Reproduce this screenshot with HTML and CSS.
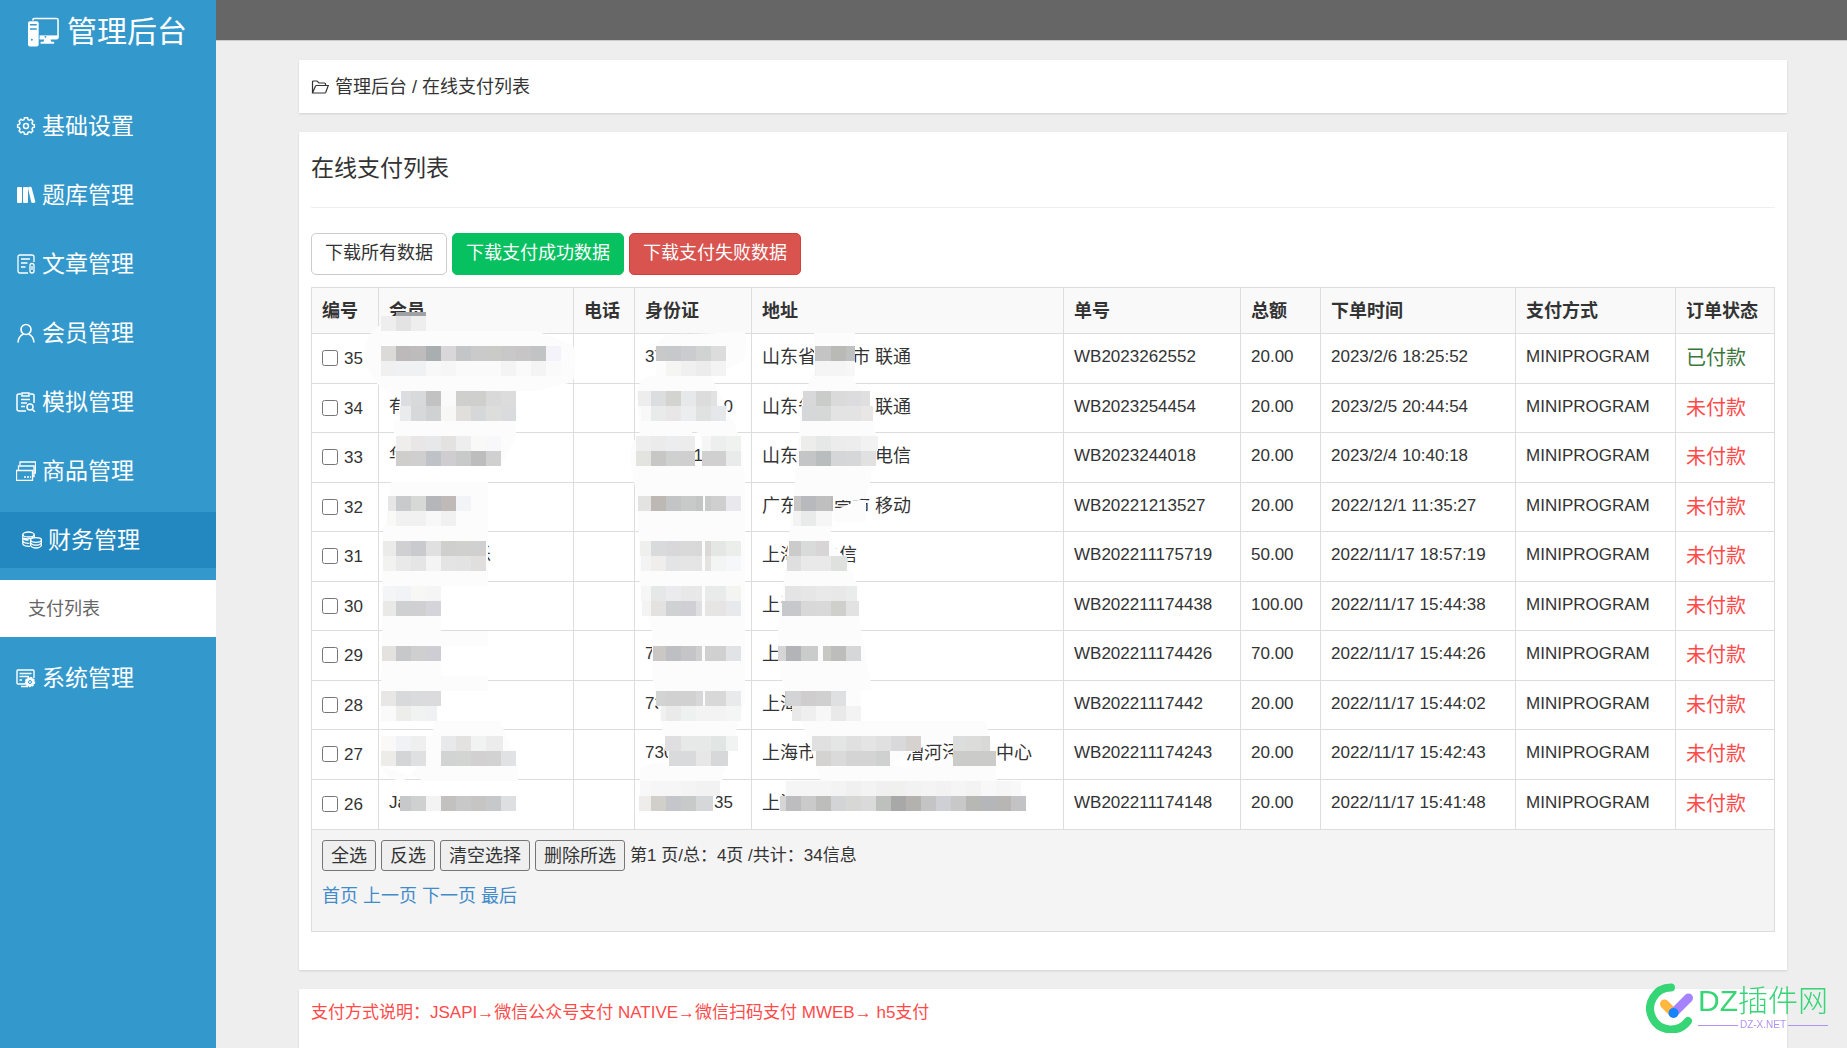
FILE: index.html
```html
<!DOCTYPE html>
<html lang="zh-CN">
<head>
<meta charset="utf-8">
<meta name="viewport" content="width=device-width, initial-scale=1">
<title>在线支付列表 - 管理后台</title>
<link rel="stylesheet" href="styles.css">
</head>
<body>
<div class="layout">
  <aside class="sidebar">
    <a class="brand" href="#">
      <svg class="brand-icon" viewBox="0 0 32 30" fill="none" stroke="currentColor" stroke-width="1.6">
        <path d="M5 3V2.500Q5 1 6.500 1H29.500Q31 1 31 2.500V20.500Q31 22 29.500 22H12"/>
        <path d="M12 18.500H31V22H12Z" fill="currentColor" stroke="none"/>
        <path d="M17 22H23L24 25H27V27H13V25H16Z" fill="currentColor" stroke="none"/>
        <path d="M2 4H9Q11 4 11 6V28Q11 30 9 30H2Q0 30 0 28V6Q0 4 2 4Z" fill="currentColor" stroke="none"/>
        <path d="M2 7.500H9M2 12H9" stroke="#3398cc"/>
        <circle cx="4" cy="23" r="1" fill="#3398cc" stroke="none"/>
        <circle cx="18" cy="20" r="1" fill="#3398cc" stroke="none"/>
      </svg>
      <span>管理后台</span>
    </a>
    <nav class="menu">
      <a class="menu-item" href="#">
        <svg class="menu-icon" viewBox="-1 0 22 22" fill="none" stroke="currentColor" stroke-width="1.600"><path d="M8.300 2h3.400l.5 2 1.600.7 1.800-1.100 2 2.100-1 1.800.6 1.600 2 .5v2.800l-2 .5-.6 1.600 1 1.800-2 2.100-1.800-1.100-1.600.7-.5 2H8.300l-.5-2-1.600-.7-1.800 1.100-2-2.100 1-1.800-.6-1.600-2-.5V9.600l2-.5.6-1.600-1-1.800 2-2.100 1.800 1.100 1.600-.7z"/><circle cx="10" cy="11" r="2.700"/></svg>
        <span>基础设置</span>
      </a>
      <a class="menu-item" href="#">
        <svg class="menu-icon" viewBox="0 0 20 20" fill="currentColor"><rect x="1" y="2" width="5" height="16" rx="1"/><rect x="7" y="2" width="5" height="16" rx="1"/><path d="M12 3.200q-.2-1 .8-1.200l1.600-.2q1-.1 1.200.8L19.300 16.500q.2 1-.8 1.200l-2 .3q-1 .1-1.200-.8z"/></svg>
        <span>题库管理</span>
      </a>
      <a class="menu-item" href="#">
        <svg class="menu-icon" viewBox="0 0 20 20" fill="none" stroke="currentColor" stroke-width="1.300"><path d="M12 19H4Q2 19 2 17V3Q2 1 4 1H16Q18 1 18 3V8M5 5H14M5 9H11.500M5 13H9.500"/><rect x="14" y="9.500" width="4" height="9.500" rx="2"/><path d="M16 12V16"/></svg>
        <span>文章管理</span>
      </a>
      <a class="menu-item" href="#">
        <svg class="menu-icon" viewBox="0 0 20 20" fill="none" stroke="currentColor" stroke-width="1.600"><circle cx="10" cy="6.500" r="5"/><path d="M2 19.500Q2.500 13 7.500 11M18 19.500Q17.500 13 12.500 11"/></svg>
        <span>会员管理</span>
      </a>
      <a class="menu-item" href="#">
        <svg class="menu-icon" viewBox="0 0 20 20" fill="none" stroke="currentColor" stroke-width="1.500"><path d="M10 19H3Q1 19 1 17V3.500Q1 2 3 2H5M14 2H16Q18 2 18 3.500V11"/><path d="M6 1H13V4H6ZM5 7.500H14M5 11H11M5 14.500H9"/><circle cx="14" cy="15" r="3"/><path d="M16 17L19 20"/></svg>
        <span>模拟管理</span>
      </a>
      <a class="menu-item" href="#">
        <svg class="menu-icon" viewBox="0 0 20 20" fill="none" stroke="currentColor" stroke-width="1.300"><path d="M4 4V1H19.500V12H18M2.500 9V5H18V15.500H16.500M.5 9.500H16.500V19.500H.5Z"/><path d="M8 16H15" stroke-dasharray="2 1"/></svg>
        <span>商品管理</span>
      </a>
      <div class="menu-group">
        <a class="menu-item menu-item-open" href="#">
          <svg class="menu-icon" viewBox="0 0 20 18" fill="none" stroke="currentColor" stroke-width="1.300"><ellipse cx="6.500" cy="3.500" rx="5.700" ry="2.500"/><path d="M.8 3.500V13Q2 15.500 8 15.300M12.200 3.500V6M.8 6.700Q2 9.200 6.500 9.200M.8 10Q2 12.500 7.500 12.300M2 7.200Q6 9 11.500 6.500"/><ellipse cx="14" cy="9" rx="5.400" ry="2.300"/><path d="M8.600 9V14.500Q10 17 14 17T19.400 14.500V9M8.600 11.700Q10 14.200 14 14.200T19.400 11.700"/></svg>
          <span>财务管理</span>
        </a>
        <a class="submenu-item" href="#">支付列表</a>
      </div>
      <a class="menu-item" href="#">
        <svg class="menu-icon" viewBox="0 0 20 20" fill="none" stroke="currentColor" stroke-width="1.400"><path d="M10 16H2Q1 16 1 15V3Q1 2 2 2H17Q18 2 18 3V10M3.500 5.500H15.500M3.500 8.500H13M3.500 12H6M5 18.500H12"/><circle cx="14" cy="14" r="4.500" fill="currentColor" stroke-dasharray="2 1"/><circle cx="14" cy="14" r="1.500" stroke="#3398cc" stroke-width="1"/></svg>
        <span>系统管理</span>
      </a>
    </nav>
  </aside>

  <div class="page">
    <header class="topbar"></header>
    <main class="content">
      <div class="card breadcrumb">
        <svg class="crumb-icon" viewBox="0 0 18 14" fill="none" stroke="currentColor" stroke-width="1.200"><path d="M1.500 12.500V2Q1.500 1 2.500 1H6L8 3H13.500Q14.500 3 14.500 4V5.500M1.500 13L4.500 6Q4.700 5.500 5.500 5.500H17.300L14.800 12.300Q14.500 13 13.800 13Z"/></svg>
        <span>管理后台 / 在线支付列表</span>
      </div>

      <section class="card list-card">
        <h1 class="list-title">在线支付列表</h1>
        <div class="actions">
          <button class="btn btn-default" type="button">下载所有数据</button>
          <button class="btn btn-success" type="button">下载支付成功数据</button>
          <button class="btn btn-danger" type="button">下载支付失败数据</button>
        </div>
        <div class="table-wrap">
          <table class="pay-table">
            <colgroup>
              <col class="col-id"><col class="col-member"><col class="col-phone"><col class="col-card"><col class="col-address"><col class="col-order"><col class="col-total"><col class="col-time"><col class="col-method"><col>
            </colgroup>
            <thead>
              <tr><th>编号</th><th>会员</th><th>电话</th><th>身份证</th><th>地址</th><th>单号</th><th>总额</th><th>下单时间</th><th>支付方式</th><th>订单状态</th></tr>
            </thead>
            <tbody>
              <tr><td><label class="pick"><input type="checkbox">35</label></td><td></td><td></td><td>37</td><td class="address">山东省　　市 联通</td><td>WB2023262552</td><td>20.00</td><td>2023/2/6 18:25:52</td><td>MINIPROGRAM</td><td class="status paid">已付款</td></tr>
              <tr><td><label class="pick"><input type="checkbox">34</label></td><td>有</td><td></td><td><span class="tail">0</span></td><td class="address">山东省　　　 联通</td><td>WB2023254454</td><td>20.00</td><td>2023/2/5 20:44:54</td><td>MINIPROGRAM</td><td class="status">未付款</td></tr>
              <tr><td><label class="pick"><input type="checkbox">33</label></td><td>华</td><td></td><td><span class="middle">1</span></td><td class="address">山东省　　　 电信</td><td>WB2023244018</td><td>20.00</td><td>2023/2/4 10:40:18</td><td>MINIPROGRAM</td><td class="status">未付款</td></tr>
              <tr><td><label class="pick"><input type="checkbox">32</label></td><td></td><td></td><td></td><td class="address">广东　　莞市 移动</td><td>WB20221213527</td><td>20.00</td><td>2022/12/1 11:35:27</td><td>MINIPROGRAM</td><td class="status">未付款</td></tr>
              <tr><td><label class="pick"><input type="checkbox">31</label></td><td>　　　　　乐</td><td></td><td></td><td class="address">上海　 电信</td><td>WB202211175719</td><td>50.00</td><td>2022/11/17 18:57:19</td><td>MINIPROGRAM</td><td class="status">未付款</td></tr>
              <tr><td><label class="pick"><input type="checkbox">30</label></td><td></td><td></td><td></td><td class="address">上海</td><td>WB202211174438</td><td>100.00</td><td>2022/11/17 15:44:38</td><td>MINIPROGRAM</td><td class="status">未付款</td></tr>
              <tr><td><label class="pick"><input type="checkbox">29</label></td><td></td><td></td><td>7</td><td class="address">上</td><td>WB202211174426</td><td>70.00</td><td>2022/11/17 15:44:26</td><td>MINIPROGRAM</td><td class="status">未付款</td></tr>
              <tr><td><label class="pick"><input type="checkbox">28</label></td><td></td><td></td><td>73</td><td class="address">上海</td><td>WB20221117442</td><td>20.00</td><td>2022/11/17 15:44:02</td><td>MINIPROGRAM</td><td class="status">未付款</td></tr>
              <tr><td><label class="pick"><input type="checkbox">27</label></td><td></td><td></td><td>730</td><td class="address">上海市　　　　　漕河泾　　中心</td><td>WB202211174243</td><td>20.00</td><td>2022/11/17 15:42:43</td><td>MINIPROGRAM</td><td class="status">未付款</td></tr>
              <tr><td><label class="pick"><input type="checkbox">26</label></td><td>Ja</td><td></td><td><span class="tail">35</span></td><td class="address">上海</td><td>WB202211174148</td><td>20.00</td><td>2022/11/17 15:41:48</td><td>MINIPROGRAM</td><td class="status">未付款</td></tr>
            </tbody>
            <tfoot>
              <tr><td colspan="10">
                <div class="bulk">
                  <button class="bulk-btn" type="button">全选</button>
                  <button class="bulk-btn" type="button">反选</button>
                  <button class="bulk-btn" type="button">清空选择</button>
                  <button class="bulk-btn" type="button">删除所选</button>
                  <span class="summary">第1 页/总：4页 /共计：34信息</span>
                </div>
                <div class="pager"><a href="#">首页</a> <a href="#">上一页</a> <a href="#">下一页</a> <a href="#">最后</a></div>
              </td></tr>
            </tfoot>
          </table>
          <svg class="mosaic" viewBox="311 287 729 552" aria-hidden="true">
            <g fill="#fcfcfc" fill-rule="evenodd">
              <path d="M365 350Q366 332 385 322L426 316V331H536L573 345Q578 360 573 382L537 391H516V436L501 466H394L400 398L386 391Q366 378 365 350Z"/>
              <path d="M394 421H515L512 436H394ZM391 482H488V526H386ZM383 526H488V586H382ZM382 586H441V631H488V646H382ZM382 646H441V676H488V691H441L432 736H380ZM455 721H500L518 766V781H425L381 766V721H455ZM381 751H425Q412 781 400 781Q386 779 381 766Z"/>
              <path d="M656 346Q662 332 690 334L745 332Q748 350 744 361L711 376L723 402L735 425L742 446L745 481V700L722 780L712 811H640V770Q650 760 669 763L652 676V631L640 586L638 511L634 481Q625 440 640 436L637 391Q640 374 656 376ZM692 430L700 434L703 466H695Z"/>
              <path d="M814 333H855V383Q872 392 873 421L877 440L870 482L866 497L833 511L830 541L847 560L858 586L861 631L872 690H861V721H985L996 755V779L1027 797V808H780L790 781H821L803 725L780 676L778 631L784 580L795 482L802 400L814 370ZM890 764L933 742H953V757L905 768ZM834 500H866V522H834Z"/>
            </g>
            <g id="mosaic-cells"></g>
          </svg>
        </div>
      </section>

      <section class="card note">支付方式说明：JSAPI→微信公众号支付 NATIVE→微信扫码支付 MWEB→ h5支付</section>
    </main>
  </div>
</div>

<div class="watermark">
  <svg class="watermark-logo" viewBox="0 0 48 50" fill="none" stroke-linecap="round">
    <path d="M25 4.500A21 21 0 1 0 42 38" stroke="#36d576" stroke-width="8"/>
    <path d="M18.500 21L27 29.500" stroke="#ffb73e" stroke-width="9"/>
    <path d="M42.500 15L27.500 30" stroke="#a583ff" stroke-width="9"/>
    <circle cx="27.500" cy="30" r="5" fill="#1684fc"/>
  </svg>
  <div class="watermark-text">
    <span class="watermark-name">DZ插件网</span>
    <span class="watermark-site">DZ-X.NET</span>
  </div>
</div>
<script src="mosaic.js"></script>
</body>
</html>
```
FILE: styles.css
```css
* { box-sizing: border-box; }

body {
  margin: 0;
  background: #eee;
  color: #333;
  font-family: "Liberation Sans", "Noto Sans CJK SC", sans-serif;
  font-size: 18px;
  font-weight: 400;
  line-height: 26px;
}

a { color: #428bca; text-decoration: none; }
button { font: inherit; color: inherit; cursor: pointer; }

.layout { display: flex; min-height: 100vh; }

/* Sidebar */
.sidebar { flex: 0 0 216px; background: #3398cc; }
.brand {
  display: flex;
  align-items: center;
  gap: 8px;
  height: 64px;
  padding-left: 28px;
  color: #fff;
  font-size: 30px;
}
.brand-icon { width: 31px; height: 30px; }
.menu { display: flex; flex-direction: column; gap: 13px; padding-top: 34px; }
.menu-item {
  display: flex;
  align-items: center;
  gap: 6px;
  height: 56px;
  padding-left: 16px;
  color: #fff;
  font-size: 23px;
}
.menu-icon { width: 20px; height: 20px; }
.menu-group { display: flex; flex-direction: column; gap: 12px; }
.menu-item-open { padding-left: 22px; background: #2288bf; }
.submenu-item {
  display: flex;
  align-items: center;
  height: 57px;
  padding-left: 28px;
  background: #fff;
  color: #666;
}

/* Page */
.page { display: flex; flex: 1; flex-direction: column; min-width: 0; }
.topbar { height: 41px; background: #666; border-bottom: 1px solid #ccc; }
.content {
  display: flex;
  flex: 1;
  flex-direction: column;
  gap: 19px;
  padding: 19px 60px 0 83px;
}
.card { padding: 0 12px; background: #fff; box-shadow: 0 1px 2px rgba(0, 0, 0, .12); }
.breadcrumb { display: flex; align-items: center; gap: 6px; height: 53px; }
.crumb-icon { width: 18px; height: 14px; }

.list-card { padding-bottom: 38px; }
.list-title {
  margin: 0 0 25px;
  padding: 20px 0 22px;
  border-bottom: 1px solid #eee;
  font-size: 23px;
  font-weight: 400;
  line-height: 33px;
}
.actions { display: flex; gap: 5px; margin-bottom: 12px; }
.btn {
  height: 42px;
  padding: 0 13px 2px;
  border: 1px solid #ccc;
  border-radius: 5px;
  background: #fff;
  white-space: nowrap;
}
.btn-success { border-color: #07c160; background: #07c160; color: #fff; }
.btn-danger { border-color: #d43f3a; background: #d9534f; color: #fff; }

/* Payments table */
.table-wrap { position: relative; }
.pay-table { width: 100%; border-collapse: collapse; table-layout: fixed; }
.col-id { width: 67px; }
.col-member { width: 195px; }
.col-phone { width: 61px; }
.col-card { width: 117px; }
.col-address { width: 312px; }
.col-order { width: 177px; }
.col-total { width: 80px; }
.col-time { width: 195px; }
.col-method { width: 160px; }
.pay-table th, .pay-table td {
  padding: 10px 0 0 10px;
  border: 1px solid #ddd;
  text-align: left;
  vertical-align: top;
  white-space: nowrap;
}
.pay-table th { height: 46px; background: #f9f9f9; font-weight: 700; }
.pay-table tbody tr { height: 50px; }
.pay-table tbody tr:nth-child(even) { height: 49px; }
.pay-table tbody tr:last-child { height: 50px; }
.pay-table tbody td { font-size: 17px; }
.pay-table tbody .address { font-size: 18px; }
.pick { display: flex; align-items: center; gap: 6px; padding-top: 2px; }
.pick input { width: 16px; height: 16px; margin: 0 0 3px; }
.pay-table tbody .status { padding-top: 11px; color: #ff4a4a; font-size: 20px; }
.pay-table tbody .paid { color: #3c763d; }
.tail, .middle { display: block; width: 88px; text-align: right; }
.middle { width: 58px; }
.pay-table tfoot td { height: 102px; background: #f4f4f4; }
.bulk { display: flex; align-items: center; gap: 5px; }
.bulk-btn {
  height: 31px;
  padding: 0 8px;
  border: 1px solid #767676;
  border-radius: 3px;
  background: #efefef;
  line-height: 26px;
}
.summary { font-size: 17px; }
.pager { padding-top: 12px; }
.mosaic { position: absolute; top: 0; left: 0; width: 729px; height: 552px; pointer-events: none; }

.note { flex: 1; padding-top: 11px; color: #ff4a4a; font-size: 17px; }

/* Site watermark */
.watermark {
  position: fixed;
  right: 19px;
  bottom: 15px;
  display: flex;
  align-items: flex-start;
  gap: 4px;
  pointer-events: none;
}
.watermark-logo { width: 48px; height: 50px; }
.watermark-text { display: flex; flex-direction: column; }
.watermark-name { color: #36d576; font-size: 30px; font-weight: 300; line-height: 36px; }
.watermark-site {
  display: flex;
  align-items: center;
  gap: 2px;
  color: #ac94f4;
  font-size: 10px;
  line-height: 12px;
}
.watermark-site::before, .watermark-site::after { content: ""; flex: 1; height: 1px; background: #ac94f4; }
```
FILE: mosaic.js
```js
// Privacy mosaic over member, ID and address cells.
// Each run: top, left, right, then one colour per 15px grid cell.
const runs = `
312 396 426 a0a1a2 a0a1a2
316 381 426 eeeeee e3e3e4 eeeeee
346 381 561 dcdad8 bdb9bb bdbbbc a9aeb1 d9d7da c3c5c7 cacaca cacac9 c8c8c8 c7c5c5 c2c3c4 f3f3f9
361 381 561 f0f0f0 f0f1f2 f0f1f2 f8f8f8 f6f6f6 fafafa fafafa fafafa f4f4f4 fafafa f4f4f4 fafafa
391 401 516 dcdde0 d8d9db c2c2c3 fafafa cfcfcd cfcfce d9d9d9 dcdcdc
406 400 516 e9ebec d7d8d9 d0d1d2 f7f7f5 e1dfdc d6d7d8 dddddc dadbdc
436 396 501 f0eeed e8e6e7 e7e8ea e3e2e0 eeeeee f9f9f7 f8f8fb
451 396 501 cfcecd cfcfcf bfc3c8 cfcdcf c8c9c9 bdbdbd d0d0d1
496 388 471 e6e6e6 c9cacc d7d9d7 b5b6b9 bfbab7 f3f4f8
511 387 456 f9f9f7 f1f1f1 f1f1f1 f8f8f8 f1f1f1
541 383 486 ebebea d0d0d2 c9cacd e0e0e1 cfcfcd d0d0cf d0d0d0
556 383 486 f2f2f1 e9e9e9 e5e5e5 f4f4f4 e4e4e4 e3e3e3 e0dfdd
586 383 441 f4f5f6 f1f3f7 f7f7f5 f5f5f5
601 383 441 e9e9e8 cfd0d2 d0d0d2 d4d4da
646 382 441 e3e2df c7c8c9 cfcfd0 cdcdd3
691 381 441 e8e7e5 d8d9db dadbdc dbdbdd
706 381 437 fafafa ededec f1f3f3 f0f1f2
736 381 426 fbf9f7 f0f2f5 efeff0
736 441 503 e8e9ea e4e2e0 f0f3f2 ececec ececec
751 381 426 eeece9 d4d5d7 dfe0e1
751 441 516 d2d4d4 d2d5d2 d2d0d1 d2d2d2 e0e2e4
796 400 516 c7c8ca cfd1d0 f3f3f3 c3c1c0 c8c8c8 c7c4c4 c7c8c9 dedfe0
346 656 726 c9c9ca c7c8cb cacccf d1d2d2 dcdcdd
361 666 726 f5f5f3 f0f0f0 ececed f3f3f3
391 638 717 ededed dcdddf d3d4d0 e6e8ea dcdcdd e0e2e4
406 641 726 f8f8f8 e9eaea e8e6e6 ecedef e0e1e1 e6e7ea
436 636 695 efeeee eaebea ecedee ebeceb
436 702 741 f6f6f6 edeeee f0f2f0
451 636 695 e3e3e0 c7c8c6 cfd0d0 cfcfcf
451 702 741 d0d0d1 d0d0d1 e9ebea
496 638 703 e3e3e2 bdb8b4 c3c4c6 c8c9c9 c2c5c4
496 705 741 c8cac9 cfcfcf e9e9ed
541 640 702 efefed d9dadb d8d8da d8d9d8 d8d8d9
541 705 741 dad9d7 e5e7e5 eceeec
556 641 702 f3f3f3 efeeec e3e4e6 e5e5e5 e5e4e4
556 705 741 e5e3df f3f4f4 f5f7fa
586 641 702 f5f6f5 e6e8e7 ebeaec e8e8e8 e9e9ea
586 705 741 e8ebea e8ebea f4f4f3
601 642 702 f3f3f3 e4e2e0 cfd1d3 cfcfd4 dfdfe1
601 705 741 e6e5e3 e6e5e3 e8e9ec
646 653 702 cac7c4 bebfc3 c5c5c7 cfcfcf
646 705 741 d0d0d0 d0d0d0 e2e3e6
691 656 703 d2d3d3 d0d1d0 d2d1d1 d7d7d9
691 705 741 d8d8d8 d8d8d8 e9eaec
706 661 741 f0f0f0 ebeaea edf1ef f3f3f3 f3f3f3 f3f6f5
736 665 738 dfdfe2 dfdfe2 e6e9e8 e7e9e9 e1e5e3 f0f3f2
751 669 728 d8dadc d8dadc e7e7e8 d7d8da d7d8da
781 640 720 f8f8f8 f6f6f6 f6f6f6 f4f4f4 f2f2f2 f2f2f2
796 639 713 eeedec d0cfca c5c6cc c8caca d6d7d9 d6d7d9
346 815 855 c4c4c4 c4c4c4 b9bab5 bfc0c0
361 815 855 f0f1f1 f5f5f5 f5f5f5 f7f7f7
391 803 870 d8d8da caccca dadadb dcdcde dfdfdf
406 802 873 d6d7d9 d6d7d7 e3e3e4 e4e3e3 e8e7e6
436 801 878 ededec e6e8e7 ececed ededed f2f2f2 f2f2f2
451 799 876 c3c5c6 c3c5c6 b9bdbe d5d6d8 d6d7d9 e1e1e2
496 794 833 c8c7c6 b7b9bc bfbfbf b9b9b7
511 793 832 f3f3f3 e9ebeb f6f6f6 f6f6f6
541 789 829 cbcbcc d9dada d7d5d6 d7d5d6
556 787 847 dfdfdf e9e9e9 e9e9e9 dfe1de dfe1de
586 785 857 e3e4e3 e3e4e3 e5e6e5 e9e9e9 e8e8e8 e9ecea
601 782 859 c7c8cb c7c8cb d7d8d7 dad9d9 cfd0cc e2e2e2
646 778 818 d5d5d5 b3b4b7 cacccb cacccb
646 823 861 c7c7c4 bdbebb d6d7d9
691 785 861 c5c6c9 d3d4d5 cfcdce d0d0d0 dfe0e2
706 792 861 e9e9e9 efefef f7f7f7 e9e9e9 f3f3f3
736 812 921 e0e0e0 e0e0e0 e4e5e5 e0e0e0 e4e4e4 e0e0e0 d9d9db d5d2d0
736 953 990 dcdedd dcdcda d9d9d7
751 816 890 d4d3d2 dadada d4d4d4 d4d4d4 cfd0d0
751 953 996 cbccc9 cbccc9 cbcbca cfcfcd
781 786 1021 f5f5f5 f5f5f5 f5f5f5 f3f3f3 f0f0f0 f3f3f3 f0f0f0 f0f0ee f2f2f2 f4f4f4 f2f2f2 f5f5f5 f3f3f3 f8f8f8 f6f6f6 f8f8f8
796 780 1026 d5d5d5 bdbdbf cacaca bdbebb d3d4d6 d7d7d6 d9dad9 bdc0bd a8a8a8 b3b2af c4c4c4 cfd0d5 c8c8c8 b7b7b4 b5b6b9 b7b6b4 c3c3c5 dad8d7
`;
const cell = 15;
const origin = 381;
const group = document.getElementById('mosaic-cells');
for (const run of runs.trim().split('\n')) {
  const [top, left, right, ...colours] = run.split(' ');
  let x = Number(left);
  for (const colour of colours) {
    const next = Math.min(Number(right), origin + cell * (Math.floor((x - origin) / cell) + 1));
    if (next <= x) break;
    const rect = document.createElementNS('http://www.w3.org/2000/svg', 'rect');
    rect.setAttribute('x', x);
    rect.setAttribute('y', top);
    rect.setAttribute('width', next - x);
    rect.setAttribute('height', top === '312' ? 4 : cell);
    rect.setAttribute('fill', '#' + colour);
    group.append(rect);
    x = next;
  }
}
```
